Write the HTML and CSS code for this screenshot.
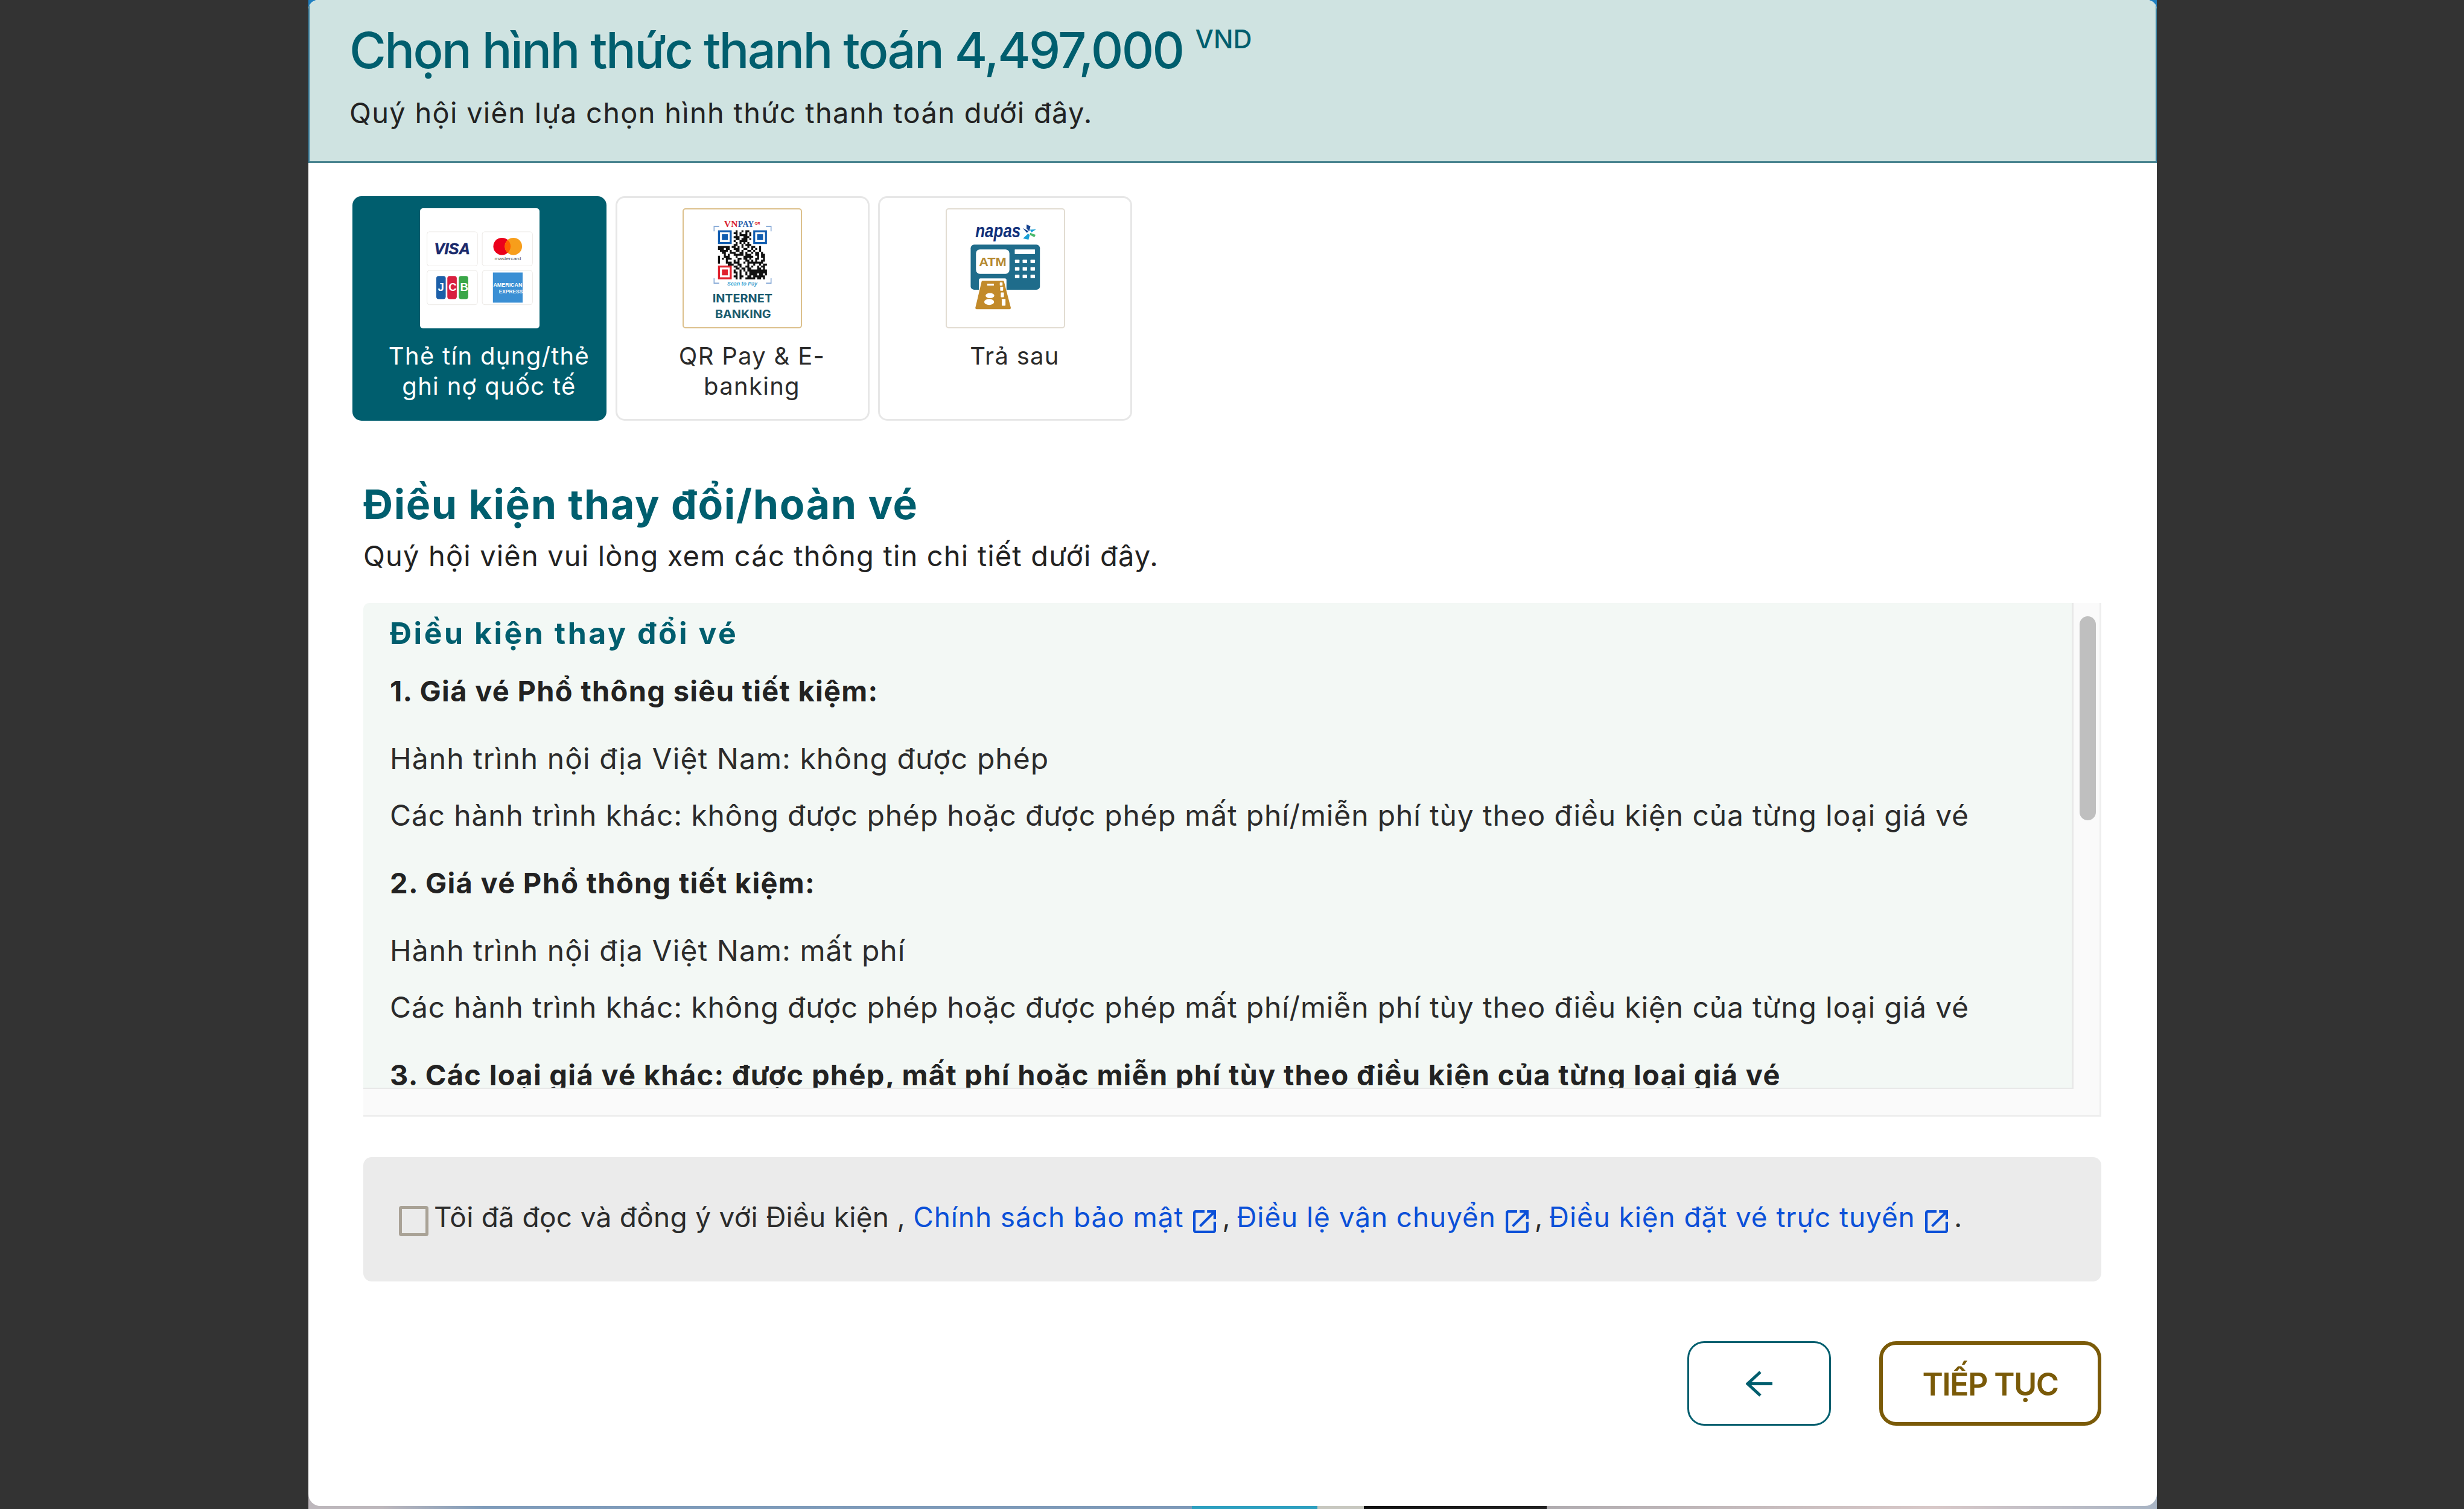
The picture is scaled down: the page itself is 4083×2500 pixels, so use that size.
FILE: index.html
```html
<!DOCTYPE html>
<html lang="vi">
<head>
<meta charset="utf-8">
<title>Chọn hình thức thanh toán</title>
<link rel="stylesheet" href="styles.css">
</head>
<body>
<div class="stage">
  <main class="modal">
    <header class="head">
      <h1 class="title">Chọn hình thức thanh toán 4,497,000<sup class="cur">VND</sup></h1>
      <p class="sub">Quý hội viên lựa chọn hình thức thanh toán dưới đây.</p>
    </header>

    <section class="methods">
      <div class="method active">
        <div class="thumb">
          <svg class="thumb-art" viewBox="377 105 595 598">
            <g fill="#fff" stroke="#ece9e6" stroke-width="3">
              <rect x="412" y="222" width="251" height="170" rx="12"/>
              <rect x="687" y="222" width="250" height="170" rx="12"/>
              <rect x="412" y="415" width="251" height="170" rx="12"/>
              <rect x="687" y="415" width="250" height="170" rx="12"/>
            </g>
            <text class="logo-visa" x="448" y="333" textLength="178" lengthAdjust="spacingAndGlyphs">VISA</text>
            <circle cx="785" cy="295" r="43" fill="#eb001b"/>
            <circle cx="842" cy="295" r="43" fill="#f79e1b"/>
            <path d="M813.500 262.800a43 43 0 0 1 0 64.400a43 43 0 0 1 0-64.400z" fill="#ff5f00"/>
            <text class="logo-mc" x="748" y="362" textLength="132" lengthAdjust="spacingAndGlyphs">mastercard</text>
            <rect x="458" y="442" width="47" height="115" rx="12" fill="#1c5fa8"/>
            <rect x="513" y="442" width="47" height="115" rx="12" fill="#d8203f"/>
            <rect x="570" y="442" width="47" height="115" rx="12" fill="#3aa648"/>
            <text class="logo-jcb" x="466" y="518">J</text>
            <text class="logo-jcb" x="519" y="518">C</text>
            <text class="logo-jcb" x="577" y="518">B</text>
            <rect x="740" y="425" width="148" height="150" fill="#3a8fd4"/>
            <text class="logo-amex" x="742" y="497" textLength="144" lengthAdjust="spacingAndGlyphs">AMERICAN</text>
            <text class="logo-amex" x="770" y="530" textLength="118" lengthAdjust="spacingAndGlyphs">EXPRESS</text>
          </svg>
        </div>
        <p class="method-label">Thẻ tín dụng/thẻ<br>ghi nợ quốc tế</p>
      </div>

      <div class="method">
        <div class="thumb gold">
          <svg class="thumb-art" viewBox="360 105 598 598">
            <text class="logo-vn" x="566" y="192" textLength="70" lengthAdjust="spacingAndGlyphs" fill="#d8232f">VN</text>
            <text class="logo-vn" x="637" y="192" textLength="82" lengthAdjust="spacingAndGlyphs" fill="#2a62ad">PAY</text>
            <text class="logo-qr" x="722" y="180" textLength="28" lengthAdjust="spacingAndGlyphs">QR</text>
            <path d="M515 215v-25h26M780 190h26v25M515 455v25h26M780 480h26v-25" fill="none" stroke="#86a9d6" stroke-width="5"/>
            <g transform="translate(535 210) scale(10)">
              <path fill="none" stroke="#111" stroke-width="1" d="M9 .5h1m2 0h1m1 0h2M8 1.500h2m1 0h1m2 0h1m1 0h1M9 2.500h1m1 0h4m1 0h1M8 3.500h3m2 0h3M9 4.500h2m1 0h3m1 0h1M8 5.500h1m2 0h4M9 6.500h1m1 0h1m1 0h1m1 0h1M8 7.500h2m2 0h1m1 0h3M0 8.500h6m1 0h2m1 0h1m1 0h1m2 0h1m1 0h2m2 0h1M0 9.500h3m1 0h2m2 0h3m2 0h2m2 0h1m1 0h1m1 0h1M1 10.500h4m1 0h1m2 0h2m1 0h1m2 0h2m1 0h1m2 0h1M2 11.500h2m2 0h3m2 0h2m1 0h1m2 0h1m1 0h2m1 0h1M3 12.500h1m1 0h1m2 0h5m1 0h3m2 0h2m1 0h2M0 13.500h1m2 0h3m3 0h1m3 0h5m2 0h1m1 0h2M0 14.500h1m1 0h1m1 0h3m3 0h2m1 0h2m1 0h1m2 0h2m2 0h1M0 15.500h1m3 0h1m3 0h1m1 0h1m3 0h2m1 0h1m1 0h1m2 0h2M0 16.500h1m3 0h3m1 0h3m2 0h1m1 0h8M5 17.500h3m2 0h2m3 0h1m2 0h1m2 0h1m1 0h2M8 18.500h2m1 0h1m2 0h2m1 0h1m2 0h1m1 0h2M9 19.500h2m1 0h2m1 0h2m3 0h2m1 0h1M8 20.500h1m2 0h1m1 0h1m1 0h10M8 21.500h2m1 0h1m2 0h1m1 0h9M9 22.500h1m1 0h1m2 0h1m1 0h4m1 0h2m1 0h1M8 23.500h2m1 0h2m2 0h2m1 0h6M9 24.500h1m1 0h1m2 0h5m1 0h2m1 0h1"/>
              <g fill="none" stroke="#0f5cb0" stroke-width="1">
                <rect x=".5" y=".5" width="6" height="6"/>
                <rect x="18.500" y=".5" width="6" height="6"/>
              </g>
              <rect x="2" y="2" width="3" height="3" fill="#0f5cb0"/>
              <rect x="20" y="2" width="3" height="3" fill="#0f5cb0"/>
              <rect x=".5" y="18.500" width="6" height="6" fill="none" stroke="#e0222e" stroke-width="1"/>
              <rect x="2" y="20" width="3" height="3" fill="#e0222e"/>
            </g>
            <text class="logo-scan" x="582" y="493" textLength="154" lengthAdjust="spacingAndGlyphs">Scan to Pay</text>
            <text class="logo-ib" x="507" y="579" textLength="306" lengthAdjust="spacingAndGlyphs">INTERNET</text>
            <text class="logo-ib" x="520" y="658" textLength="286" lengthAdjust="spacingAndGlyphs">BANKING</text>
          </svg>
        </div>
        <p class="method-label">QR Pay &amp; E-<br>banking</p>
      </div>

      <div class="method">
        <div class="thumb sand">
          <svg class="thumb-art" viewBox="377 105 595 598">
            <text class="logo-napas" x="522" y="246" textLength="230" lengthAdjust="spacingAndGlyphs">napas</text>
            <path d="M782 182l20 8-6 26-14-14z" fill="#14418f"/>
            <path d="M762 199l30 16-8 9z" fill="#14418f"/>
            <path d="M764 252l26-24 8 8-6 22z" fill="#1a9fd6"/>
            <path d="M800 208l30-2-24 16z" fill="#1a9fd6"/>
            <path d="M800 224l28 10-6 12-24-12z" fill="#49b96b"/>
            <rect x="498" y="284" width="352" height="229" rx="18" fill="#1f6c8b"/>
            <rect x="525" y="308" width="170" height="124" rx="20" fill="#fff"/>
            <text class="logo-atm" x="540" y="392" textLength="140" lengthAdjust="spacingAndGlyphs">ATM</text>
            <rect x="722" y="308" width="103" height="24" rx="2" fill="#fff"/>
            <g fill="#fff">
              <rect x="723" y="360" width="23" height="18" rx="3"/><rect x="762" y="360" width="23" height="18" rx="3"/><rect x="802" y="360" width="23" height="18" rx="3"/>
              <rect x="723" y="398" width="23" height="18" rx="3"/><rect x="762" y="398" width="23" height="18" rx="3"/><rect x="802" y="398" width="23" height="18" rx="3"/>
              <rect x="723" y="436" width="23" height="18" rx="3"/><rect x="762" y="436" width="23" height="18" rx="3"/><rect x="802" y="436" width="23" height="18" rx="3"/>
            </g>
            <path d="M540 513v-50a8 8 0 0 1 8-8h124a8 8 0 0 1 8 8v50z" fill="#fff"/>
            <path d="M553 474a7 7 0 0 1 7-7h101a7 7 0 0 1 7 7l34 130a7 7 0 0 1-7 8H529a7 7 0 0 1-7-8z" fill="#c28a2a"/>
            <g fill="#fff">
              <ellipse cx="596" cy="543" rx="22" ry="13"/>
              <ellipse cx="592" cy="575" rx="25" ry="15"/>
              <rect x="582" y="482" width="34" height="10"/>
              <rect x="646" y="475" width="14" height="17" rx="3"/>
              <rect x="648" y="498" width="15" height="20" rx="3"/>
              <rect x="651" y="527" width="16" height="24" rx="3"/>
              <rect x="656" y="560" width="19" height="34" rx="3"/>
            </g>
          </svg>
        </div>
        <p class="method-label">Trả sau</p>
      </div>
    </section>

    <section class="terms">
      <h2 class="terms-title">Điều kiện thay đổi/hoàn vé</h2>
      <p class="terms-sub">Quý hội viên vui lòng xem các thông tin chi tiết dưới đây.</p>

      <div class="box">
        <div class="box-view">
          <h3 class="box-title">Điều kiện thay đổi vé</h3>
          <p class="fare">1. Giá vé Phổ thông siêu tiết kiệm:</p>
          <p class="rule">Hành trình nội địa Việt Nam: không được phép</p>
          <p class="rule last">Các hành trình khác: không được phép hoặc được phép mất phí/miễn phí tùy theo điều kiện của từng loại giá vé</p>
          <p class="fare">2. Giá vé Phổ thông tiết kiệm:</p>
          <p class="rule">Hành trình nội địa Việt Nam: mất phí</p>
          <p class="rule last">Các hành trình khác: không được phép hoặc được phép mất phí/miễn phí tùy theo điều kiện của từng loại giá vé</p>
          <p class="fare">3. Các loại giá vé khác: được phép, mất phí hoặc miễn phí tùy theo điều kiện của từng loại giá vé</p>
        </div>
        <div class="track"><div class="track-thumb"></div></div>
      </div>

      <div class="agree">
        <span class="check"></span>
        <p class="agree-text">Tôi đã đọc và đồng ý với Điều kiện , <a class="link">Chính sách bảo mật<svg class="ext" viewBox="3 3 18 18"><path d="M19 19H5V5h7V3H5c-1.110 0-2 .9-2 2v14c0 1.100.89 2 2 2h14c1.100 0 2-.9 2-2v-7h-2v7zM14 3v2h3.590l-9.830 9.830 1.410 1.410L19 6.410V10h2V3h-7z"/></svg></a><span class="sep"> , </span><a class="link">Điều lệ vận chuyển<svg class="ext" viewBox="3 3 18 18"><path d="M19 19H5V5h7V3H5c-1.110 0-2 .9-2 2v14c0 1.100.89 2 2 2h14c1.100 0 2-.9 2-2v-7h-2v7zM14 3v2h3.590l-9.830 9.830 1.410 1.410L19 6.410V10h2V3h-7z"/></svg></a><span class="sep"> , </span><a class="link">Điều kiện đặt vé trực tuyến<svg class="ext" viewBox="3 3 18 18"><path d="M19 19H5V5h7V3H5c-1.110 0-2 .9-2 2v14c0 1.100.89 2 2 2h14c1.100 0 2-.9 2-2v-7h-2v7zM14 3v2h3.590l-9.830 9.830 1.410 1.410L19 6.410V10h2V3h-7z"/></svg></a><span class="sep"> .</span></p>
      </div>

      <div class="actions">
        <button class="btn back" type="button" aria-label="Quay lại">
          <svg class="arrow" viewBox="0 0 44 43"><path d="M24 2L3 21.500 24 41M4 21.500h40" fill="none" stroke="#005e6e" stroke-width="5"/></svg>
        </button>
        <button class="btn next" type="button">TIẾP TỤC</button>
      </div>
    </section>
  </main>
</div>
</body>
</html>
```

FILE: styles.css
```css
html, body { margin: 0; height: 2500px; overflow: hidden; }
body { background: #333; font-family: "Inter", "Noto Sans", sans-serif; color: #222; }
h1, h2, h3, p { margin: 0; }

.stage {
  width: 3063px;
  height: 2500px;
  margin-left: 511px;
  background:
    linear-gradient(#1f7fc0 0 40px, transparent 40px),
    linear-gradient(90deg, #bdb7bc 0, #bdb7bc 4%, #7f9cbb 9.500%, #7d99b8 47.800%, #2ea0c0 47.800%, #2ea0c0 54.600%, #c8c8c0 54.600%, #c8c8c0 57.100%, #111 57.100%, #222 67%, #b0acb0 67%, #d8c8c8 88%, #a8b4c4 100%);
}
.modal {
  height: 2495px;
  background: #fff;
  border-radius: 16px 16px 20px 20px;
  overflow: hidden;
}

.head {
  box-sizing: border-box;
  height: 270px;
  padding: 32px 0 0 66px;
  background: #cfe3e1;
  border-left: 2px solid #3a80a0;
  border-right: 2px solid #3a80a0;
  border-bottom: 3px solid #4a8590;
}
.title {
  font-size: 83px;
  line-height: 103px;
  font-weight: 500;
  letter-spacing: -2.650px;
  color: #005e6e;
}
.cur {
  font-size: 43px;
  line-height: 0;
  letter-spacing: 0;
  vertical-align: 33px;
  margin-left: 20px;
}
.sub {
  margin-top: 22px;
  font-size: 47px;
  line-height: 60px;
  letter-spacing: 1.280px;
}

.methods {
  display: flex;
  gap: 14.500px;
  margin-top: 55px;
  padding-left: 73px;
}
.method {
  box-sizing: border-box;
  width: 421px;
  height: 372px;
  padding-top: 17px;
  border: 3px solid #e7e7e7;
  border-radius: 15px;
  background: #fff;
  color: #2b2b2b;
}
.method.active { background: #005e6e; border-color: #005e6e; color: #fff; }
.thumb {
  box-sizing: border-box;
  width: 198px;
  height: 199px;
  margin: 0 auto;
  background: #fff;
  border-radius: 5px;
  overflow: hidden;
}
.thumb.gold { border: 2px solid #dcc08c; }
.thumb.sand { border: 2px solid #e2dcd2; }
.thumb-art { display: block; width: 100%; height: 100%; }
.method-label {
  margin-top: 21px;
  padding-left: 32px;
  font-size: 40px;
  line-height: 50px;
  letter-spacing: 1.300px;
  text-align: center;
  white-space: nowrap;
}

.logo-visa { font: italic 700 78px "Liberation Sans", sans-serif; fill: #1a2a6c; stroke: #1a2a6c; stroke-width: 2px; }
.logo-mc { font: 400 22px "Liberation Sans", sans-serif; fill: #555; }
.logo-jcb { font: 700 56px "Liberation Sans", sans-serif; fill: #fff; }
.logo-amex { font: 700 26px "Liberation Sans", sans-serif; fill: #fff; }
.logo-vn { font: 700 42px "Liberation Serif", serif; }
.logo-qr { font: 700 18px "Liberation Sans", sans-serif; fill: #d8232f; }
.logo-scan { font: italic 700 27px "Liberation Sans", sans-serif; fill: #3a9fd0; }
.logo-ib { font: 700 58px "Inter", sans-serif; fill: #1b5b6e; }
.logo-napas { font: italic 700 95px "Liberation Sans", sans-serif; fill: #10307a; }
.logo-atm { font: 700 62px "Liberation Sans", sans-serif; fill: #b5892f; }

.terms { padding: 0 92px 0 91px; }
.terms-title {
  margin-top: 98px;
  font-size: 68px;
  line-height: 80px;
  font-weight: 700;
  letter-spacing: 1.600px;
  color: #005e6e;
}
.terms-sub {
  margin-top: 16px;
  font-size: 47px;
  line-height: 60px;
  letter-spacing: 1.160px;
}

.box {
  display: grid;
  grid-template-columns: 1fr 43px;
  box-sizing: border-box;
  height: 851px;
  margin-top: 48px;
  background: #fafafa;
  border-right: 3px solid #eee;
  border-bottom: 3px solid #eee;
  border-top-left-radius: 10px;
}
.box-view {
  box-sizing: border-box;
  height: 805px;
  padding: 20px 0 0 44px;
  background: #f3f8f5;
  border-right: 3px solid #e8e8e8;
  border-bottom: 2px solid #e8e8e8;
  border-top-left-radius: 10px;
  overflow: hidden;
}
.box-title {
  font-size: 50px;
  line-height: 60px;
  font-weight: 700;
  letter-spacing: 3.500px;
  color: #005e6e;
  margin-bottom: 19px;
}
.fare {
  font-size: 47px;
  line-height: 94px;
  font-weight: 700;
  letter-spacing: 1.300px;
  margin-bottom: 18px;
  white-space: nowrap;
}
.rule {
  font-size: 48px;
  line-height: 94px;
  letter-spacing: 1.050px;
  color: #2b2b2b;
  white-space: nowrap;
}
.rule.last { margin-bottom: 18px; letter-spacing: .85px; }
.track { padding: 22px 6px 0 10px; }
.track-thumb { width: 27px; height: 338px; border-radius: 14px; background: #bfbfbf; }

.agree {
  display: flex;
  align-items: flex-start;
  gap: 9px;
  box-sizing: border-box;
  height: 206px;
  margin-top: 67px;
  padding: 69px 0 0 59px;
  background: #ebebeb;
  border-radius: 14px;
}
.check {
  flex: none;
  box-sizing: border-box;
  width: 49px;
  height: 50px;
  margin-top: 12px;
  border: 5px solid #a9a296;
  border-radius: 4px;
}
.agree-text {
  font-size: 46px;
  line-height: 60px;
  letter-spacing: .27px;
  color: #2b2b2b;
  white-space: nowrap;
}
.link { color: #0b50d8; letter-spacing: .9px; }
.sep { word-spacing: -3px; }
.ext {
  width: 38px;
  height: 38px;
  margin-left: 16px;
  vertical-align: -10px;
  fill: #0b50d8;
}

.actions {
  display: flex;
  justify-content: flex-end;
  gap: 80px;
  margin-top: 99px;
}
.btn {
  display: flex;
  align-items: center;
  justify-content: center;
  box-sizing: border-box;
  height: 140px;
  padding: 0;
  background: #fff;
  border-radius: 28px;
  font-family: inherit;
}
.back { width: 238px; border: 3px solid #005e6e; }
.next {
  width: 368px;
  padding-top: 3px;
  border: 6px solid #7a5a08;
  color: #7a5a08;
  font-size: 52px;
  font-weight: 600;
  letter-spacing: -1.600px;
}
.arrow { width: 44px; height: 43px; }
```
